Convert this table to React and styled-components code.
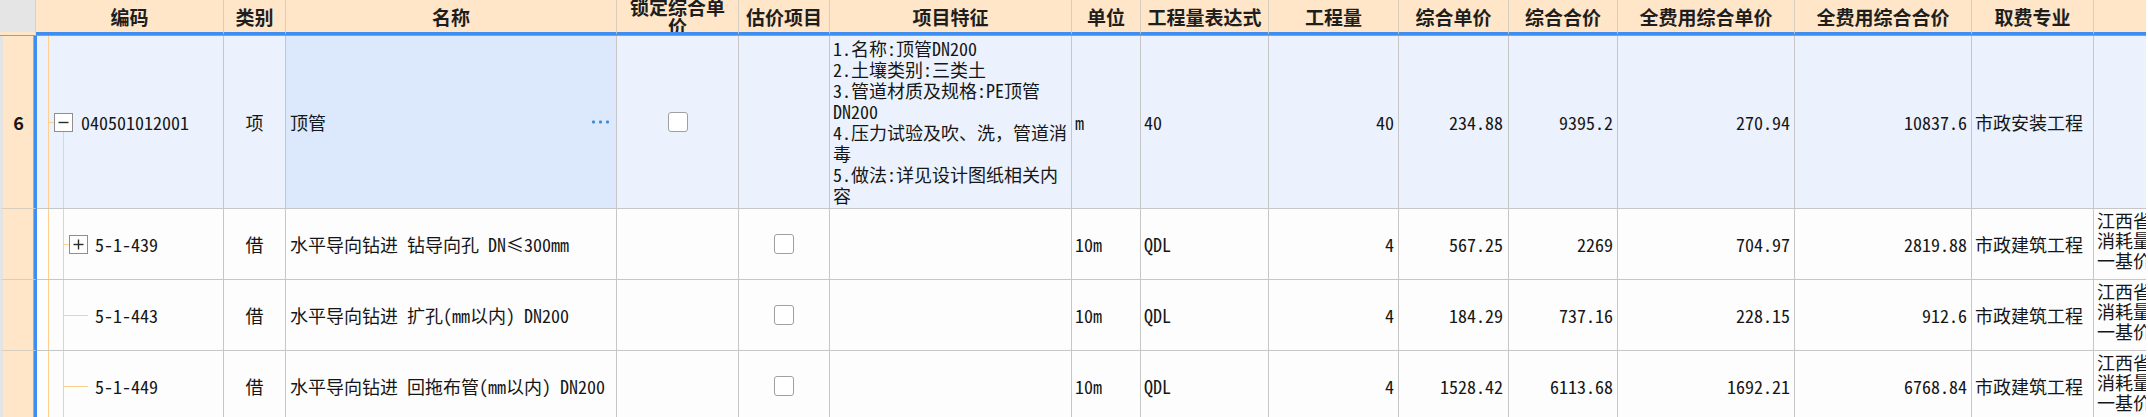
import React from 'react';
import styled, { createGlobalStyle } from 'styled-components';

const FONT = `"Noto Sans Mono CJK SC", "Noto Sans CJK SC", "Liberation Mono", monospace`;
const HEAD_FONT = `"Noto Sans CJK SC", "Noto Sans", sans-serif`;
const BLUE = '#3D8EF0';
const LINE = '#C6C6C6';
const TREE = '#FFCF8F';
const PEACH = '#FFE6C8';

const Global = createGlobalStyle`
  html, body { margin: 0; padding: 0; background: #fff; overflow: hidden; }
  body { font-family: ${FONT}; color: #161616; }
`;

const COLS = [187, 62, 331, 122, 91, 242, 69, 128, 130, 110, 109, 177, 177, 122, 140];
const REST = COLS.slice(1).map((w) => `${w}px`).join(' ');

const Viewport = styled.div`
  width: 2146px;
  height: 417px;
  overflow: hidden;
  background: #fff;
`;

const Sheet = styled.div`
  display: flex;
  flex-direction: column;
  width: 2234px;
`;

const HeaderRow = styled.div`
  display: grid;
  grid-template-columns: 36px 188px ${REST};
  height: 36px;
  border-bottom: 1px solid #9d9d9d;
  box-sizing: border-box;
`;

const Corner = styled.div`
  background: #E5E5E5;
  border-right: 1px solid #d2d2d2;
  border-bottom: 3px solid ${PEACH};
  box-sizing: border-box;
`;

const HeadCell = styled.div`
  box-sizing: border-box;
  background: ${PEACH};
  border-right: 1px solid #D6CDBF;
  border-bottom: 3px solid ${BLUE};
  display: flex;
  align-items: center;
  justify-content: center;
  text-align: center;
  padding: 0 5px;
  overflow: hidden;
  font-family: ${HEAD_FONT};
  font-weight: 700;
  font-size: 19px;
  line-height: 19px;
  color: #1e1e1e;
`;

const BodyRow = styled.div`
  display: grid;
  grid-template-columns: 37px 187px ${REST};
  grid-template-rows: ${(p) => (p.$height ? `${p.$height}px` : 'auto')};
  background: ${(p) => (p.$current ? '#EBF2FD' : '#FDFDFD')};
`;

const RowNum = styled.div`
  box-sizing: border-box;
  background: ${PEACH};
  border-left: 3px solid #E4E4E4;
  border-right: 3px solid ${BLUE};
  border-bottom: 1px solid #D9CDBD;
  box-shadow: inset -1px 0 0 #A9A9A9;
  display: flex;
  align-items: center;
  justify-content: center;
  font-family: ${HEAD_FONT};
  font-weight: 700;
  font-size: 18px;
`;

const Cell = styled.div`
  box-sizing: border-box;
  border-right: 1px solid ${LINE};
  border-bottom: 1px solid ${LINE};
  background: ${(p) => (p.$selected ? '#DCE9FC' : 'transparent')};
  display: flex;
  align-items: ${(p) => (p.$top ? 'flex-start' : 'center')};
  justify-content: ${(p) =>
    p.$align === 'right' ? 'flex-end' : p.$align === 'center' ? 'center' : 'flex-start'};
  padding: ${(p) => (p.$top ? '1px' : '0')} ${(p) => p.$pr ?? 4}px 0 ${(p) => p.$pl ?? 4}px;
  overflow: hidden;
  font-size: 18px;
  line-height: 21px;
  white-space: nowrap;
  min-width: 0;
`;

const NameText = styled.span`
  flex: 1;
`;

const Features = styled.div`
  white-space: normal;
  padding: 2px 0;
  width: 100%;
`;

const FeatureLine = styled.div`
  line-height: 21px;
`;

const Wrapped = styled.div`
  white-space: normal;
  line-height: 20px;
  width: 130px;
  flex: none;
`;

const Gutter = styled.span`
  flex: none;
  align-self: stretch;
  width: ${(p) => p.$w}px;
  box-sizing: border-box;
  padding-left: ${(p) => p.$boxAt}px;
  display: flex;
  align-items: center;
  background-image: ${(p) => p.$layers.map(() => `linear-gradient(${TREE}, ${TREE})`).join(', ')};
  background-repeat: no-repeat;
  background-position: ${(p) => p.$layers.map((l) => l.pos).join(', ')};
  background-size: ${(p) => p.$layers.map((l) => l.size).join(', ')};
`;

const ToggleBox = styled.span`
  width: 19px;
  height: 19px;
  box-sizing: border-box;
  border: 1px solid #8E8E8E;
  background: #fff;
  display: flex;
  align-items: center;
  justify-content: center;
`;

const Check = styled.span`
  width: 20px;
  height: 20px;
  box-sizing: border-box;
  border: 1.5px solid #A0A0A0;
  border-radius: 3px;
  background: #fff;
`;

const Dots = styled.svg`
  flex: none;
  margin-right: 7px;
`;

const HEADERS = [
  '编码', '类别', '名称', '锁定综合单价', '估价项目', '项目特征', '单位', '工程量表达式',
  '工程量', '综合单价', '综合合价', '全费用综合单价', '全费用综合合价', '取费专业', '',
];

const BOOK = '江西省市政工程消耗量定额及统一基价表(2017)';

const ROWS = [
  {
    num: '6', current: true, tree: 'root', code: '040501012001', type: '项', name: '顶管',
    lock: true, est: false,
    features: ['1.名称:顶管DN200', '2.土壤类别:三类土', '3.管道材质及规格:PE顶管DN200', '4.压力试验及吹、洗，管道消毒', '5.做法:详见设计图纸相关内容'],
    unit: 'm', expr: '40', qty: '40', price: '234.88', total: '9395.2', fprice: '270.94', ftotal: '10837.6',
    spec: '市政安装工程', book: '',
  },
  {
    tree: 'branch', code: '5-1-439', type: '借', name: '水平导向钻进 钻导向孔 DN≤300mm', est: true,
    unit: '10m', expr: 'QDL', qty: '4', price: '567.25', total: '2269', fprice: '704.97', ftotal: '2819.88',
    spec: '市政建筑工程', book: BOOK,
  },
  {
    tree: 'leaf', code: '5-1-443', type: '借', name: '水平导向钻进 扩孔(mm以内) DN200', est: true,
    unit: '10m', expr: 'QDL', qty: '4', price: '184.29', total: '737.16', fprice: '228.15', ftotal: '912.6',
    spec: '市政建筑工程', book: BOOK,
  },
  {
    tree: 'leaf', code: '5-1-449', type: '借', name: '水平导向钻进 回拖布管(mm以内) DN200', est: true,
    unit: '10m', expr: 'QDL', qty: '4', price: '1528.42', total: '6113.68', fprice: '1692.21', ftotal: '6768.84',
    spec: '市政建筑工程', book: BOOK,
  },
];

function Toggle({ open }) {
  return (
    <ToggleBox>
      <svg width="11" height="11" viewBox="0 0 11 11">
        <line x1="0.5" y1="5.5" x2="10.5" y2="5.5" stroke="#2a2a2a" strokeWidth="1.4" />
        {!open && <line x1="5.5" y1="0.5" x2="5.5" y2="10.5" stroke="#2a2a2a" strokeWidth="1.4" />}
      </svg>
    </ToggleBox>
  );
}

function Tree({ kind }) {
  if (kind === 'root') {
    const layers = [
      { pos: '11px 0', size: '1px 100%' },
      { pos: '26px 100%', size: '1px 50%' },
      { pos: '11px center', size: '6px 1px' },
    ];
    return (
      <Gutter $w={44} $boxAt={17} $layers={layers}>
        <Toggle open />
      </Gutter>
    );
  }
  if (kind === 'branch') {
    const layers = [
      { pos: '11px 0', size: '1px 100%' },
      { pos: '26px 0', size: '1px 100%' },
      { pos: '26px center', size: '6px 1px' },
    ];
    return (
      <Gutter $w={58} $boxAt={32} $layers={layers}>
        <Toggle />
      </Gutter>
    );
  }
  const layers = [
    { pos: '11px 0', size: '1px 100%' },
    { pos: '26px 0', size: '1px 100%' },
    { pos: '26px center', size: '25px 1px' },
  ];
  return <Gutter $w={58} $boxAt={0} $layers={layers} />;
}

function Row({ r }) {
  return (
    <BodyRow $current={r.current} $height={r.current ? null : 71}>
      <RowNum>{r.num}</RowNum>
      <Cell $pl={0}>
        <Tree kind={r.tree} />
        <span>{r.code}</span>
      </Cell>
      <Cell $align="center">{r.type}</Cell>
      <Cell $selected={r.current} $pl={4} $pr={0}>
        <NameText>{r.name}</NameText>
        {r.current && (
          <Dots width="17" height="4" viewBox="0 0 17 4">
            <rect x="0" y="0.5" width="3" height="3" rx="1" fill="#3E8BD8" />
            <rect x="7" y="0.5" width="3" height="3" rx="1" fill="#3E8BD8" />
            <rect x="14" y="0.5" width="3" height="3" rx="1" fill="#3E8BD8" />
          </Dots>
        )}
      </Cell>
      <Cell $align="center">{r.lock && <Check />}</Cell>
      <Cell $align="center">{r.est && <Check />}</Cell>
      <Cell $pl={3} $pr={2}>
        {r.features && (
          <Features>
            {r.features.map((f) => (
              <FeatureLine key={f}>{f}</FeatureLine>
            ))}
          </Features>
        )}
      </Cell>
      <Cell $pl={3}>{r.unit}</Cell>
      <Cell $pl={3}>{r.expr}</Cell>
      <Cell $align="right">{r.qty}</Cell>
      <Cell $align="right" $pr={5}>{r.price}</Cell>
      <Cell $align="right">{r.total}</Cell>
      <Cell $align="right">{r.fprice}</Cell>
      <Cell $align="right">{r.ftotal}</Cell>
      <Cell $pl={3}>{r.spec}</Cell>
      <Cell $top $pl={3}>{r.book && <Wrapped>{r.book}</Wrapped>}</Cell>
    </BodyRow>
  );
}

export default function App() {
  return (
    <Viewport>
      <Global />
      <Sheet>
        <HeaderRow>
          <Corner />
          {HEADERS.map((h, i) => (
            <HeadCell key={i}>{h}</HeadCell>
          ))}
        </HeaderRow>
        {ROWS.map((r) => (
          <Row key={r.code} r={r} />
        ))}
      </Sheet>
    </Viewport>
  );
}
